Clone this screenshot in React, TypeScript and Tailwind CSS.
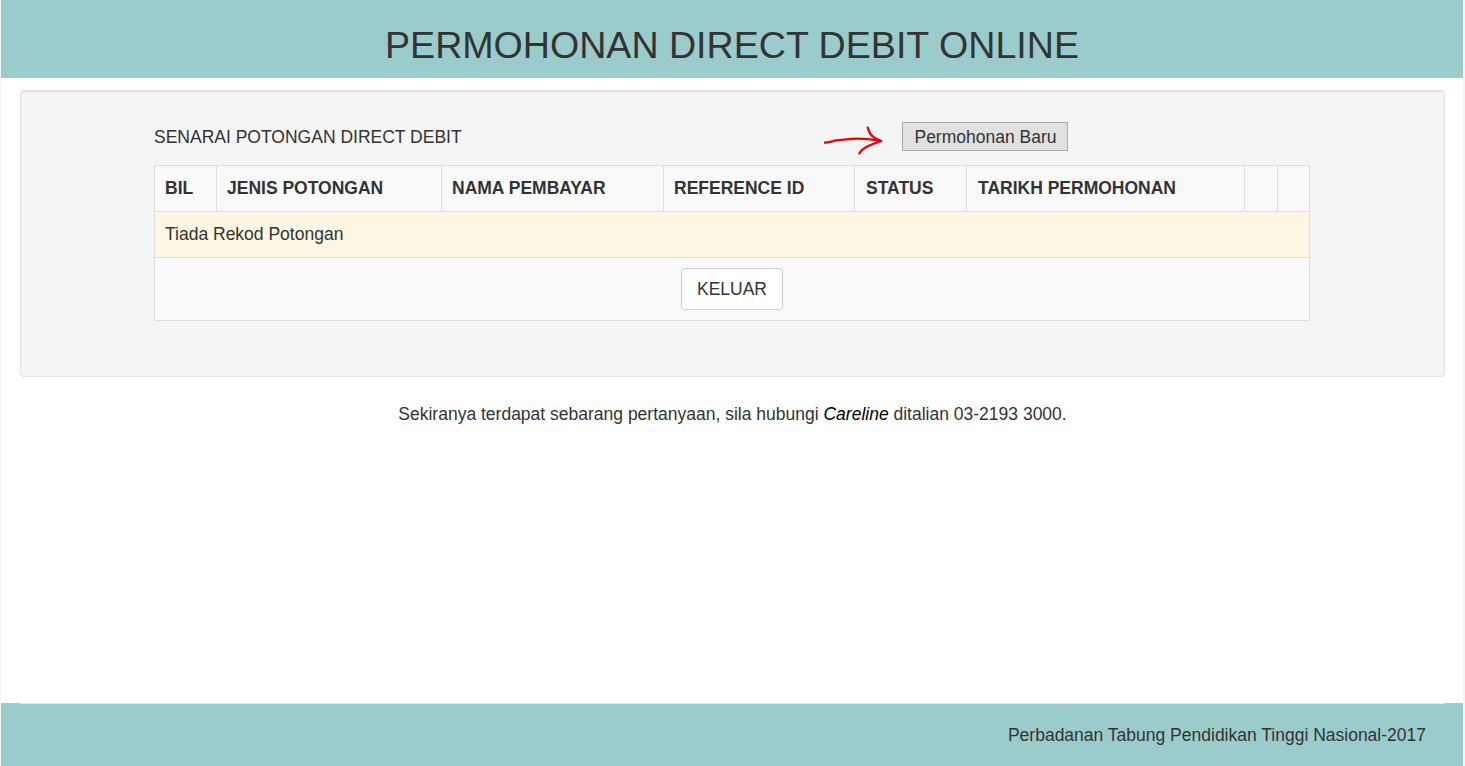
const columns = [
  { label: "BIL", width: "w-[62px]", pad: "px-[10px]" },
  { label: "JENIS POTONGAN", width: "w-[225px]", pad: "px-[10px]" },
  { label: "NAMA PEMBAYAR", width: "w-[222px]", pad: "px-[10px]" },
  { label: "REFERENCE ID", width: "w-[191px]", pad: "px-[10px]" },
  { label: "STATUS", width: "w-[112px]", pad: "pl-[11px] pr-[10px]" },
  { label: "TARIKH PERMOHONAN", width: "w-[278px]", pad: "pl-[11px] pr-[10px]" },
  { label: "", width: "w-[33px]", pad: "px-[10px]" },
  { label: "", width: "w-[32px]", pad: "px-[10px]" },
];

function HandArrow() {
  return (
    <svg width="65" height="32" viewBox="0 0 65 32" fill="none" className="shrink-0 overflow-visible">
      <path
        d="M5 21.500 C8 21.800 11 20.800 14 19.900 C18 19 25 18.500 31 18 C38 17.300 44 17.300 61 20"
        stroke="#f00000"
        strokeWidth="2.300"
        strokeLinecap="round"
        strokeLinejoin="round"
      />
      <path
        d="M47.700 6.500 L50 12.500 C53 16.500 57 18.500 61 20 C57 21.500 53 23 50 24.300 C46 26 42 28 39.300 32.300"
        stroke="#f00000"
        strokeWidth="2.300"
        strokeLinecap="round"
        strokeLinejoin="round"
      />
    </svg>
  );
}

export default function App() {
  return (
    <div className="h-[766px] overflow-hidden bg-[#f4f4f4] pl-px pr-[2px] font-['Liberation_Sans',Arial,sans-serif] text-[17.5px] text-[#333333]">
      <div className="flex h-full flex-col bg-white">
        <header className="flex h-[78px] shrink-0 items-center justify-center bg-[#9bcccc] pt-[12px]">
          <h1 className="text-[37.6px] leading-[40px] font-normal">PERMOHONAN DIRECT DEBIT ONLINE</h1>
        </header>

        <main className="flex-1 pt-3 pr-[18px] pl-[19px]">
          <section className="h-[287px] rounded border border-[#e3e3e3] bg-[#f5f5f5] pt-[31px] pl-[133px] shadow-[inset_0_1px_1px_rgba(0,0,0,0.08)]">
            <div className="flex h-[30px] items-center">
              <span className="w-[666px]">SENARAI POTONGAN DIRECT DEBIT</span>
              <HandArrow />
              <button className="ml-[17px] h-[29px] w-[166px] self-start border border-[#a9a9a9] bg-[#e1e1e1] pt-px pl-px text-center text-[#333333]">
                Permohonan Baru
              </button>
            </div>

            <table className="mt-[13px] w-[1156px] table-fixed border-collapse bg-[#f9f9f9]">
              <colgroup>
                {columns.map((c, i) => (
                  <col key={i} className={c.width} />
                ))}
              </colgroup>
              <thead>
                <tr className="h-[46px]">
                  {columns.map((c, i) => (
                    <th key={i} className={`border border-[#dddddd] text-left font-bold ${c.pad}`}>
                      {c.label}
                    </th>
                  ))}
                </tr>
              </thead>
              <tbody>
                <tr className="h-[46px] bg-[#fcf6e3]">
                  <td colSpan={8} className="border border-[#dddddd] px-[10px]">
                    Tiada Rekod Potongan
                  </td>
                </tr>
                <tr className="h-[63px]">
                  <td colSpan={8} className="border border-[#dddddd] text-center">
                    <button className="h-[42px] w-[102px] rounded border border-[#cccccc] bg-white text-[#333333]">
                      KELUAR
                    </button>
                  </td>
                </tr>
              </tbody>
            </table>
          </section>

          <p className="mt-[26px] text-center leading-[22px]">
            Sekiranya terdapat sebarang pertanyaan, sila hubungi <em className="text-black">Careline</em> ditalian 03-2193 3000.
          </p>
        </main>

        <footer className="h-[63px] shrink-0 bg-[#9bcccc]">
          <div className="mr-[18px] ml-[19px] h-px bg-[#e6e6e6]" />
          <p className="pt-[20px] pr-[37px] text-right leading-[22px]">
            Perbadanan Tabung Pendidikan Tinggi Nasional-2017
          </p>
        </footer>
      </div>
    </div>
  );
}
